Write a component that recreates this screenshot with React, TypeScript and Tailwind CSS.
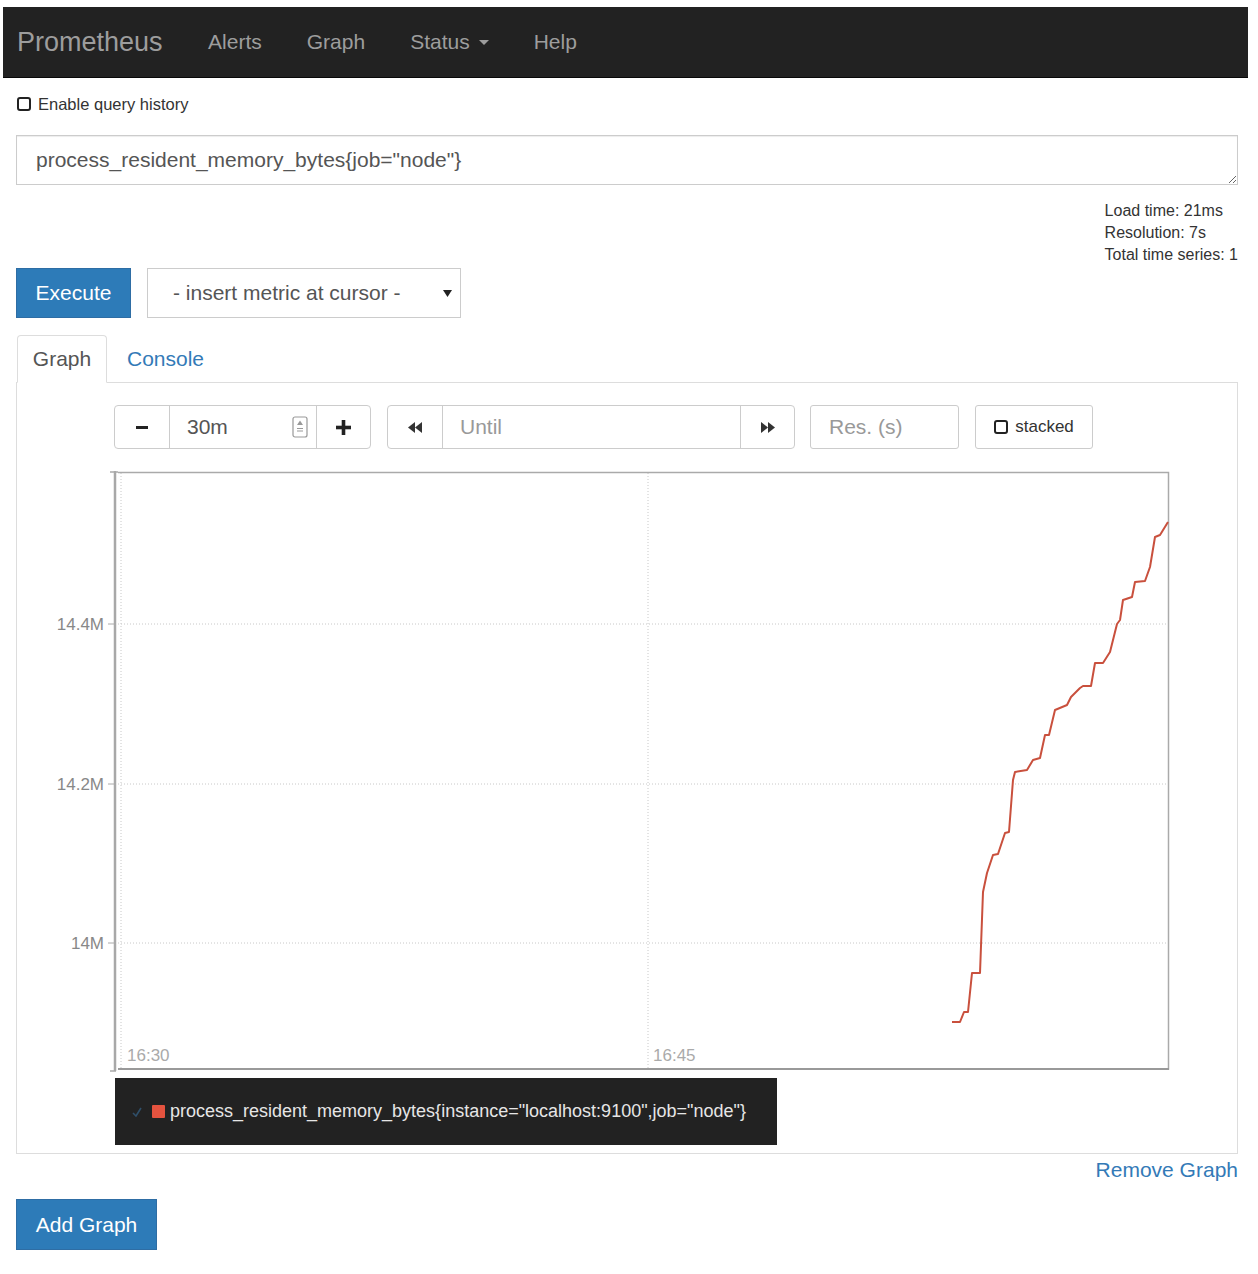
import React from "react";

const linePoints =
  "952,1022 960,1022 964,1012 968,1012 972,973 980,973 983,892 987,873 993,855 998,854 1005,833 1009,832 1013,780 1015,772 1027,770 1033,760 1040,758 1045,735 1049,735 1055,710 1067,705 1071,697 1075,693 1080,688 1083,686 1091,686 1095,663 1103,663 1110,652 1117,624 1120,620 1123,600 1132,597 1135,582 1145,581 1150,567 1155,537 1160,535 1168,522";

function CheckBox() {
  return <span className="inline-block w-[14px] h-[14px] border-2 border-[#222] rounded-[3px] bg-white" />;
}

function Chart() {
  const yTicks = [
    { y: 624, label: "14.4M" },
    { y: 784, label: "14.2M" },
    { y: 943, label: "14M" },
  ];
  return (
    <svg width={1220} height={607} viewBox="17 465 1220 607" className="block">
      {yTicks.map((t) => (
        <line key={t.y} x1={118} x2={1168} y1={t.y} y2={t.y} stroke="#c8c8c8" strokeWidth={1} strokeDasharray="1 2" />
      ))}
      <line x1={121} x2={121} y1={473} y2={1068} stroke="#c8c8c8" strokeWidth={1} strokeDasharray="1 2" />
      <line x1={648} x2={648} y1={473} y2={1068} stroke="#c8c8c8" strokeWidth={1} strokeDasharray="1 2" />
      <path d="M118 472.5 H1168.5 V1069 H118" fill="none" stroke="#aaa" strokeWidth={1.5} />
      <line x1={118} x2={1169} y1={1069} y2={1069} stroke="#999" strokeWidth={2} />
      <line x1={115} x2={115} y1={471} y2={1071} stroke="#a8a8a8" strokeWidth={2.5} />
      <line x1={110} x2={118} y1={472} y2={472} stroke="#aaa" strokeWidth={1.5} />
      <line x1={110} x2={116} y1={1071} y2={1071} stroke="#aaa" strokeWidth={1.5} />
      {yTicks.map((t) => (
        <g key={"l" + t.y}>
          <line x1={108} x2={114} y1={t.y} y2={t.y} stroke="#aaa" strokeWidth={1} />
          <text x={104} y={t.y + 6} textAnchor="end" fontSize={17} fill="#888" fontFamily="'Liberation Sans', Arial, sans-serif">
            {t.label}
          </text>
        </g>
      ))}
      <text x={127} y={1061} fontSize={17} fill="#aaa" fontFamily="'Liberation Sans', Arial, sans-serif">16:30</text>
      <text x={653} y={1061} fontSize={17} fill="#aaa" fontFamily="'Liberation Sans', Arial, sans-serif">16:45</text>
      <polyline points={linePoints} fill="none" stroke="#c9503d" strokeWidth={2} strokeLinejoin="round" />
    </svg>
  );
}

function Backward() {
  return (
    <svg width="16" height="13" viewBox="0 0 16 13">
      <polygon points="1,6.5 8,1 8,12" fill="#333" />
      <polygon points="8,6.5 15,1 15,12" fill="#333" />
    </svg>
  );
}

function Forward() {
  return (
    <svg width="16" height="13" viewBox="0 0 16 13">
      <polygon points="15,6.5 8,1 8,12" fill="#333" />
      <polygon points="8,6.5 1,1 1,12" fill="#333" />
    </svg>
  );
}

export default function App() {
  return (
    <div className="min-h-screen bg-white pt-[7px] pl-[3px] pr-[10px] font-['Liberation_Sans',Arial,sans-serif] text-[#333]">
      <nav className="h-[71px] bg-[#222] border-b border-[#080808] flex items-center text-[#9d9d9d]">
        <span className="pl-[14px] pr-[23px] text-[27px]">Prometheus</span>
        <span className="px-[22.5px] text-[21px]">Alerts</span>
        <span className="px-[22.5px] text-[21px]">Graph</span>
        <span className="px-[22.5px] text-[21px] flex items-center">
          Status
          <span className="ml-[9px] w-0 h-0 border-l-[5px] border-r-[5px] border-t-[5px] border-l-transparent border-r-transparent border-t-[#9d9d9d]" />
        </span>
        <span className="px-[22.5px] text-[21px]">Help</span>
      </nav>

      <div className="pl-[13px] pr-[10px]">
        <div className="mt-[12px] h-[28px] flex items-center ml-px">
          <CheckBox />
          <span className="ml-[7px] text-[16.5px] text-[#333]">Enable query history</span>
        </div>

        <textarea
          readOnly
          value={'process_resident_memory_bytes{job="node"}'}
          className="mt-[17px] block w-full h-[50px] border border-[#ccc] px-[19px] py-[9px] text-[21px] leading-[30px] text-[#555] resize-y outline-none shadow-[inset_0_1px_1px_rgba(0,0,0,0.075)] font-['Liberation_Sans',Arial,sans-serif]"
        />

        <div className="mt-[15px] flex justify-end">
          <div className="text-[16px] leading-[22px] text-[#333]">
            <div>Load time: 21ms</div>
            <div>Resolution: 7s</div>
            <div>Total time series: 1</div>
          </div>
        </div>

        <div className="mt-[2px] flex items-center">
          <div className="w-[115px] h-[50px] bg-[#2d7bb8] border border-[#2e6da4] text-white text-[21px] flex items-center justify-center">
            Execute
          </div>
          <div className="ml-[16px] w-[314px] h-[50px] border border-[#ccc] flex items-center pl-[25px] pr-[8px] text-[21px] text-[#555]">
            <span className="flex-1">- insert metric at cursor -</span>
            <svg width="9" height="8" viewBox="0 0 9 8">
              <polygon points="0,1 9,1 4.5,8" fill="#222" />
            </svg>
          </div>
        </div>

        <div className="mt-[17px] flex h-[48px] border-b border-[#ddd]">
          <div className="ml-px h-[48px] w-[90px] border border-[#ddd] border-b-white bg-white rounded-t-[4px] flex items-center justify-center text-[21px] text-[#555]">
            Graph
          </div>
          <div className="ml-[3px] px-[17px] flex items-center text-[21px] text-[#337ab7]">Console</div>
        </div>

        <div className="border-l border-r border-b border-[#ddd] pt-[22px] pb-[8px]">
          <div className="flex items-center ml-[97px] text-[21px]">
            <div className="w-[257px] h-[44px] border border-[#ccc] rounded-[4px] flex">
              <div className="w-[55px] border-r border-[#ccc] flex items-center justify-center">
                <span className="block w-[12px] h-[3px] bg-[#222]" />
              </div>
              <div className="w-[147px] border-r border-[#ccc] flex items-center pl-[17px] pr-[8px] text-[#555]">
                <span className="flex-1">30m</span>
                <svg width="16" height="22" viewBox="0 0 16 22">
                  <rect x="1" y="1" width="14" height="20" rx="2" fill="none" stroke="#999" strokeWidth="1.2" />
                  <polygon points="8,4.5 5,9 11,9" fill="#999" />
                  <line x1="5" x2="11" y1="12.5" y2="12.5" stroke="#999" strokeWidth="1" />
                  <line x1="5" x2="11" y1="15" y2="15" stroke="#999" strokeWidth="1" />
                </svg>
              </div>
              <div className="flex-1 flex items-center justify-center">
                <svg width="15" height="15" viewBox="0 0 15 15">
                  <rect x="5.7" y="0" width="3.6" height="15" fill="#222" />
                  <rect x="0" y="5.7" width="15" height="3.6" fill="#222" />
                </svg>
              </div>
            </div>

            <div className="ml-[16px] w-[408px] h-[44px] border border-[#ccc] rounded-[4px] flex">
              <div className="w-[55px] border-r border-[#ccc] flex items-center justify-center">
                <Backward />
              </div>
              <div className="w-[298px] border-r border-[#ccc] flex items-center pl-[17px] text-[#999]">Until</div>
              <div className="flex-1 flex items-center justify-center">
                <Forward />
              </div>
            </div>

            <div className="ml-[15px] w-[149px] h-[44px] border border-[#ccc] rounded-[3px] flex items-center pl-[18px] text-[#999]">
              Res. (s)
            </div>

            <div className="ml-[16px] w-[118px] h-[44px] border border-[#ccc] rounded-[3px] flex items-center justify-center text-[17px] text-[#333]">
              <CheckBox />
              <span className="ml-[7px]">stacked</span>
            </div>
          </div>

          <div className="mt-[16px]">
            <Chart />
          </div>

          <div className="mt-[6px] ml-[98px] w-[662px] h-[67px] bg-[#222] flex items-center pl-[17px]">
            <svg width="10" height="10" viewBox="0 0 10 10">
              <path d="M1 6 L4 9 L9 1" fill="none" stroke="#2f4f6a" strokeWidth="1.6" />
            </svg>
            <span className="ml-[10px] w-[13px] h-[13px] bg-[#e5533f] rounded-[1px]" />
            <span className="ml-[5px] text-[18px] text-[#e6e6e6]">
              {'process_resident_memory_bytes{instance="localhost:9100",job="node"}'}
            </span>
          </div>
        </div>

        <div className="h-[32px] flex items-center justify-end text-[21px] text-[#337ab7]">Remove Graph</div>

        <div className="mt-[13px] w-[141px] h-[51px] bg-[#2d7bb8] border border-[#2e6da4] text-white text-[21px] flex items-center justify-center">
          Add Graph
        </div>
      </div>
    </div>
  );
}
